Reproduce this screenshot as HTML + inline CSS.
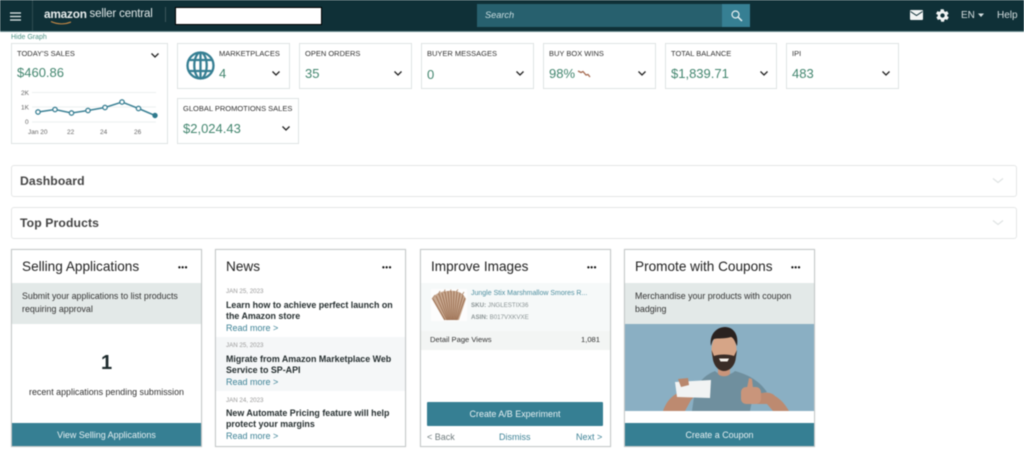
<!DOCTYPE html>
<html><head><meta charset="utf-8">
<style>
html,body{margin:0;padding:0;background:#fff;}
#p{position:relative;width:1024px;height:462px;overflow:hidden;font-family:"Liberation Sans",sans-serif;color:#222;filter:blur(.5px);background:#fff}
#p div,#p span.a,#p svg{position:absolute}
.t{white-space:nowrap;line-height:1}
.k{border:1px solid #dfe3e3;box-sizing:border-box;background:#fff}
.kl{font-size:7.5px;color:#333;white-space:nowrap;line-height:1}
.kv{font-size:13px;color:#43866f;white-space:nowrap;line-height:1;top:0}
.c{border:1px solid #c4c8c8;box-sizing:border-box;background:#fff;box-shadow:0 0 1px #ddd}
.h{font-size:13.6px;color:#222;white-space:nowrap;line-height:1}
.d{font-size:8px;color:#111;font-weight:bold;white-space:nowrap;line-height:1;letter-spacing:.5px}
.btn{background:#367f93;color:#e6f0f2;font-size:8.95px;text-align:center;box-sizing:border-box}
.acc{left:11px;width:1006px;height:32px;border:1px solid #e4e6e6;border-radius:3px;box-sizing:border-box;background:#fff}
.at{font-size:12.2px;font-weight:bold;color:#444;letter-spacing:.12px;white-space:nowrap;line-height:1}
.nd{font-size:6.2px;color:#999;white-space:nowrap;line-height:1}
.nt{font-size:8.9px;font-weight:bold;color:#262f30;white-space:nowrap;line-height:11px}
.nr{font-size:9px;color:#3d8296;white-space:nowrap;line-height:1}
</style></head><body>
<div id="p">
<!-- header -->
<div style="left:0;top:0;width:1024px;height:32px;background:#0f3037;border-bottom:1px solid #6d8f92;box-sizing:border-box"></div>
<div style="left:32px;top:0;width:1px;height:31px;background:#2e4b51"></div>
<svg style="left:10px;top:12px" width="12" height="9"><path d="M0 1h11M0 4.500h11M0 8h11" stroke="#e8eeee" stroke-width="1.300"/></svg>
<div class="t" style="left:44px;top:9px;font-size:11.800px;font-weight:bold;color:#e8eeee;letter-spacing:-.2px">amazon</div>
<div class="t" style="left:89.500px;top:9px;font-size:11.500px;color:#dfe7e7;letter-spacing:-.15px">seller central</div>
<svg style="left:50px;top:20px" width="24" height="7"><path d="M1 1.500Q11 6 21 2" stroke="#c98a45" stroke-width="1.100" fill="none"/></svg>
<div style="left:165px;top:7px;width:1px;height:15px;background:#3b565b"></div>
<div style="left:175px;top:7px;width:147px;height:18px;background:#fff;border:1.500px solid #000;box-sizing:border-box"></div>
<div style="left:477px;top:4px;width:246px;height:23px;background:#27606e"></div>
<div style="left:722px;top:4px;width:28px;height:23px;background:#367f93"></div>
<div class="t" style="left:485px;top:11px;font-size:9.200px;font-style:italic;color:#c9dde0">Search</div>
<svg style="left:730px;top:9px" width="13" height="13" viewBox="0 0 13 13"><circle cx="5.500" cy="5.500" r="3.500" stroke="#e5eff1" stroke-width="1.200" fill="none"/><path d="M8 8l4 4" stroke="#e5eff1" stroke-width="1.500"/></svg>
<svg style="left:910px;top:10px" width="13" height="10" viewBox="0 0 13 10"><rect width="13" height="10" rx="1" fill="#f2f5f5"/><path d="M.5 1.500l6 4 6-4" stroke="#0f3037" fill="none" stroke-width="1"/></svg>
<svg style="left:935px;top:8px" width="15" height="15" viewBox="0 0 24 24"><path fill="#f2f5f5" d="M19.400 13c.1-.3.100-.7.100-1s0-.7-.1-1l2.100-1.600c.2-.1.200-.4.100-.6l-2-3.500c-.1-.2-.4-.3-.6-.2l-2.500 1c-.5-.4-1.100-.7-1.700-1L14 2.400c0-.2-.2-.4-.5-.4h-4c-.3 0-.5.200-.5.400l-.4 2.700c-.6.300-1.200.6-1.700 1l-2.500-1c-.2-.1-.5 0-.6.200l-2 3.500c-.1.200-.1.500.1.600L4.600 11c0 .3-.1.700-.1 1s0 .7.100 1l-2.100 1.600c-.2.100-.2.400-.1.600l2 3.500c.1.200.4.300.6.200l2.500-1c.5.400 1.100.7 1.700 1l.4 2.700c0 .2.200.4.500.4h4c.3 0 .5-.2.500-.4l.4-2.700c.6-.3 1.200-.6 1.700-1l2.500 1c.2.100.5 0 .6-.2l2-3.500c.1-.2.100-.5-.1-.6zM12 15.500a3.500 3.500 0 1 1 0-7 3.500 3.500 0 0 1 0 7z"/></svg>
<div class="t" style="left:961px;top:11px;font-size:10px;color:#d5dfe0">EN</div>
<svg style="left:978px;top:13px" width="7" height="5"><path d="M0 .5h6L3 4z" fill="#d5dfe0"/></svg>
<div class="t" style="left:997px;top:11px;font-size:10px;color:#d5dfe0">Help</div>
<div class="t" style="left:11px;top:34px;font-size:7px;color:#4f9387">Hide Graph</div>

<!-- KPI -->
<div class="k" style="left:11px;top:43px;width:157px;height:101px"></div>
<div class="kl" style="left:17px;top:50px">TODAY'S SALES</div>
<div class="kv" style="left:17px;top:66px">$460.86</div>
<svg style="left:150px;top:52px" width="10" height="7"><path d="M1.500 1.500L5 5l3.500-3.500" stroke="#222" stroke-width="1.300" fill="none"/></svg>
<svg style="left:15px;top:85px" width="150" height="55" viewBox="15 85 150 55">
<path d="M32 92.500H156M32 107H156M32 122H156" stroke="#e8ecec" stroke-width=".8"/>
<path d="M38 112L55 109.500L71.500 113L88 110.500L105 107.500L122 102L138.500 108.500L155 115.500" fill="none" stroke="#3d8296" stroke-width="1.500"/>
<g fill="#fff" stroke="#3d8296" stroke-width="1.300"><circle cx="38" cy="112" r="2.200"/><circle cx="55" cy="109.500" r="2.200"/><circle cx="71.500" cy="113" r="2.200"/><circle cx="88" cy="110.500" r="2.200"/><circle cx="105" cy="107.500" r="2.200"/><circle cx="122" cy="102" r="2.200"/><circle cx="138.500" cy="108.500" r="2.200"/></g>
<circle cx="155" cy="115.500" r="2.700" fill="#2f7a8d"/>
<g font-family="Liberation Sans" font-size="6.500" fill="#666"><text x="21" y="95">2K</text><text x="21" y="109.500">1K</text><text x="25" y="124">0</text><text x="28" y="134">Jan 20</text><text x="67" y="134">22</text><text x="100" y="134">24</text><text x="134" y="134">26</text></g>
</svg>

<div class="k" style="left:177px;top:43px;width:113px;height:46px"></div>
<svg style="left:186px;top:51px" width="29" height="29" viewBox="0 0 29 29"><g fill="none" stroke="#367f93" stroke-width="2.300"><circle cx="14.500" cy="14.500" r="13"/><ellipse cx="14.500" cy="14.500" rx="6.200" ry="13"/><path d="M14.500 1.500v26M3 9h23M3 20h23"/></g></svg>
<div class="kl" style="left:219px;top:50px">MARKETPLACES</div>
<div class="kv" style="left:219px;top:67px">4</div>
<div class="k" style="left:299px;top:43px;width:113px;height:46px"></div>
<div class="kl" style="left:305px;top:50px">OPEN ORDERS</div>
<div class="kv" style="left:305px;top:67px">35</div>
<div class="k" style="left:421px;top:43px;width:113px;height:46px"></div>
<div class="kl" style="left:427px;top:50px">BUYER MESSAGES</div>
<div class="kv" style="left:427px;top:68px">0</div>
<div class="k" style="left:543px;top:43px;width:113px;height:46px"></div>
<div class="kl" style="left:549px;top:50px">BUY BOX WINS</div>
<div class="kv" style="left:549px;top:67px">98%</div>
<svg style="left:577px;top:69px" width="14" height="10"><path d="M1 2l3 1.500 2-1 3 3.500 2-.5 2 2.500" fill="none" stroke="#a5694f" stroke-width="1.300"/></svg>
<div class="k" style="left:665px;top:43px;width:112px;height:46px"></div>
<div class="kl" style="left:671px;top:50px">TOTAL BALANCE</div>
<div class="kv" style="left:671px;top:67px">$1,839.71</div>
<div class="k" style="left:786px;top:43px;width:113px;height:46px"></div>
<div class="kl" style="left:792px;top:50px">IPI</div>
<div class="kv" style="left:792px;top:67px">483</div>
<div class="k" style="left:177px;top:98px;width:122px;height:46px"></div>
<div class="kl" style="left:183px;top:105px">GLOBAL PROMOTIONS SALES</div>
<div class="kv" style="left:183px;top:122px">$2,024.43</div>
<svg style="left:271px;top:70px" width="10" height="7"><path d="M1.500 1.500L5 5l3.500-3.500" stroke="#222" stroke-width="1.300" fill="none"/></svg>
<svg style="left:393px;top:70px" width="10" height="7"><path d="M1.500 1.500L5 5l3.500-3.500" stroke="#222" stroke-width="1.300" fill="none"/></svg>
<svg style="left:515px;top:70px" width="10" height="7"><path d="M1.500 1.500L5 5l3.500-3.500" stroke="#222" stroke-width="1.300" fill="none"/></svg>
<svg style="left:637px;top:70px" width="10" height="7"><path d="M1.500 1.500L5 5l3.500-3.500" stroke="#222" stroke-width="1.300" fill="none"/></svg>
<svg style="left:759px;top:70px" width="10" height="7"><path d="M1.500 1.500L5 5l3.500-3.500" stroke="#222" stroke-width="1.300" fill="none"/></svg>
<svg style="left:881px;top:70px" width="10" height="7"><path d="M1.500 1.500L5 5l3.500-3.500" stroke="#222" stroke-width="1.300" fill="none"/></svg>
<svg style="left:281px;top:125px" width="10" height="7"><path d="M1.500 1.500L5 5l3.500-3.500" stroke="#222" stroke-width="1.300" fill="none"/></svg>

<!-- accordions -->
<div class="acc" style="top:165px"></div>
<div class="at" style="left:20px;top:175px">Dashboard</div>
<svg style="left:992px;top:177px" width="12" height="8"><path d="M1 1.500l5 4 5-4" stroke="#dfe3e3" stroke-width="1.200" fill="none"/></svg>
<div class="acc" style="top:207px"></div>
<div class="at" style="left:20px;top:217px">Top Products</div>
<svg style="left:992px;top:219px" width="12" height="8"><path d="M1 1.500l5 4 5-4" stroke="#dfe3e3" stroke-width="1.200" fill="none"/></svg>

<!-- card 1 -->
<div class="c" style="left:11px;top:249px;width:191px;height:198px"></div>
<div class="h" style="left:22px;top:260px">Selling Applications</div>
<div class="d" style="left:178px;top:264px">•••</div>
<div style="left:12px;top:283px;width:189px;height:41px;background:#e3e9e8"></div>
<div class="t" style="left:22px;top:290px;font-size:8.850px;color:#333;line-height:12.500px">Submit your applications to list products<br>requiring approval</div>
<div class="t" style="left:12px;top:353px;width:189px;text-align:center;font-size:20px;font-weight:bold;color:#1e2b2d">1</div>
<div class="t" style="left:12px;top:388px;width:189px;text-align:center;font-size:8.900px;color:#333">recent applications pending submission</div>
<div class="btn" style="left:12px;top:423px;width:189px;height:23px;line-height:24px">View Selling Applications</div>

<!-- card 2 -->
<div class="c" style="left:215px;top:249px;width:191px;height:198px"></div>
<div class="h" style="left:226px;top:260px">News</div>
<div class="d" style="left:382px;top:264px">•••</div>
<div style="left:216px;top:337px;width:189px;height:54px;background:#f5f7f8"></div>
<div class="nd" style="left:226px;top:289px">JAN 25, 2023</div>
<div class="nt" style="left:226px;top:300px">Learn how to achieve perfect launch on<br>the Amazon store</div>
<div class="nr" style="left:226px;top:324px">Read more &gt;</div>
<div class="nd" style="left:226px;top:343px">JAN 25, 2023</div>
<div class="nt" style="left:226px;top:354px">Migrate from Amazon Marketplace Web<br>Service to SP-API</div>
<div class="nr" style="left:226px;top:378px">Read more &gt;</div>
<div class="nd" style="left:226px;top:398px">JAN 24, 2023</div>
<div class="nt" style="left:226px;top:408px">New Automate Pricing feature will help<br>protect your margins</div>
<div class="nr" style="left:226px;top:432px">Read more &gt;</div>

<!-- card 3 -->
<div class="c" style="left:420px;top:249px;width:191px;height:198px"></div>
<div class="h" style="left:431px;top:260px">Improve Images</div>
<div class="d" style="left:587px;top:264px">•••</div>
<div style="left:421px;top:283px;width:189px;height:48px;background:#f6f9f9"></div>
<svg style="left:430px;top:288px" width="38" height="34" viewBox="0 0 38 34">
<rect x="1" y="1" width="36" height="32" fill="#fdfdfd"/>
<path d="M2 11C5 5 12 3 18 3C26 2 33 4 36 11L29 32H14Z" fill="#c9aa92"/>
<path d="M3 11L15 32M6 8L17 32M9 6L18 32M12 5L19 32M15 4L20 32M18 3L21 32M21 3L22 32M24 3L23 32M27 4L24 32M30 5L25 32M33 7L26 32M35 10L27 32" stroke="#9c7053" stroke-width=".9"/>
<path d="M2 11L5 7M8 7L10 3M14 5L15 1.500M20 4L21 1.500M26 4L28 1.500M32 7L34 4" stroke="#b08a6e" stroke-width=".9"/>
</svg>
<div class="t" style="left:471px;top:290px;font-size:7px;color:#4f8fa0">Jungle Stix Marshmallow Smores R...</div>
<div class="t" style="left:471px;top:303px;font-size:6.200px;color:#8a9394"><b>SKU:</b> JNGLESTIX36</div>
<div class="t" style="left:471px;top:315px;font-size:6.200px;color:#8a9394"><b>ASIN:</b> B017VXKVXE</div>
<div style="left:421px;top:331px;width:189px;height:19px;background:#f3f5f4"></div>
<div class="t" style="left:430px;top:336px;font-size:7.600px;color:#333">Detail Page Views</div>
<div class="t" style="left:581px;top:336px;font-size:7.600px;color:#333">1,081</div>
<div class="btn" style="left:427px;top:402px;width:176px;height:24px;line-height:24px;border-radius:1px">Create A/B Experiment</div>
<div class="t" style="left:427px;top:433px;font-size:9px;color:#6f7b7d">&lt; Back</div>
<div class="t" style="left:499px;top:433px;font-size:9px;color:#3d8296">Dismiss</div>
<div class="t" style="left:576px;top:433px;font-size:9px;color:#3d8296">Next &gt;</div>

<!-- card 4 -->
<div class="c" style="left:624px;top:249px;width:191px;height:198px"></div>
<div class="h" style="left:635px;top:260px">Promote with Coupons</div>
<div class="d" style="left:791px;top:264px">•••</div>
<div style="left:625px;top:283px;width:189px;height:41px;background:#e3e9e8"></div>
<div class="t" style="left:635px;top:290px;font-size:8.850px;color:#333;line-height:12.500px">Merchandise your products with coupon<br>badging</div>
<svg style="left:625px;top:324px" width="189" height="87" viewBox="0 0 189 87">
<rect width="189" height="87" fill="#8aafc3"/>
<path d="M67 87L70 66C75 56 82 50 90 47C95 52 105 52 110 47C120 50 132 54 142 68L128 72L125 87Z" fill="#6f8f9e"/>
<path d="M38 87C42 76 48 70 60 66L72 70L66 76L60 87Z" fill="#bd8a70"/>
<path d="M132 70C140 68 146 68 150 72C157 76 161 82 164 87L148 87L142 80L132 80Z" fill="#bd8a70"/>
<rect x="116" y="63" width="20" height="17" rx="5" fill="#c9957b"/>
<path d="M122 64L124 54L127 55L128 64Z" fill="#c9957b"/>
<path d="M50 58L86 56L85 74L52 73Z" fill="#f1f3f3"/>
<path d="M53 55L63 54L64 61L56 63Z" fill="#b8876d"/>
<path d="M93 42H105V50C102 53 96 53 93 50Z" fill="#c9957b"/>
<ellipse cx="99" cy="26" rx="12.500" ry="18" fill="#d6a587"/>
<path d="M86.500 26L88 36C90 44 95 47 99 47C104 47 109 43 110.500 36L112 26L109 32C104 30 94 30 89 32Z" fill="#3a2d27"/>
<path d="M94 34.500h10l-1.500 3h-7z" fill="#f5f0ea"/>
<path d="M86 22C84 10 92 3 100 3C108 3 114 10 112 22C110 18 109 14 106 13C100 15 92 14 89 15C87 17 87 19 86 22Z" fill="#2a2220"/>
</svg>
<div class="btn" style="left:625px;top:423px;width:189px;height:23px;line-height:24px">Create a Coupon</div>
</div>
</body></html>
